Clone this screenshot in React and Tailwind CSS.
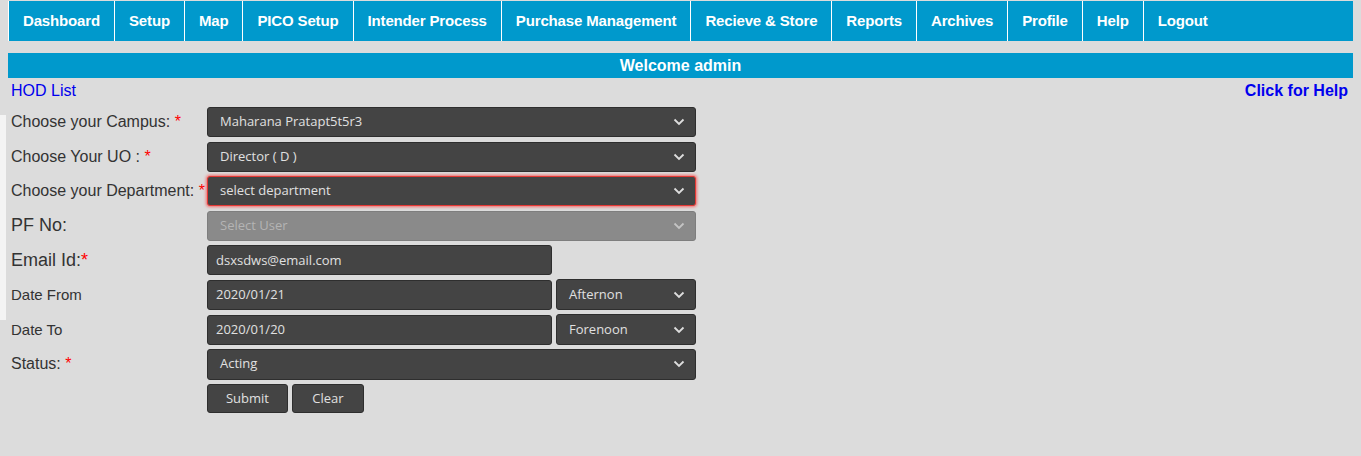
import React from 'react';

const navItems = [
  'Dashboard',
  'Setup',
  'Map',
  'PICO Setup',
  'Intender Process',
  'Purchase Management',
  'Recieve & Store',
  'Reports',
  'Archives',
  'Profile',
  'Help',
  'Logout',
];

const Chevron = ({ light }) => (
  <svg width="12" height="8" viewBox="0 0 12 8" className="absolute right-[10px] top-1/2 -translate-y-1/2">
    <path d="M1.5 1.5 L6 6 L10.5 1.5" fill="none" stroke={light ? '#c4c4c4' : '#dedede'} strokeWidth="1.8" />
  </svg>
);

const Select = ({ value, className = '', disabled, invalid }) => (
  <div
    className={
      'relative h-[30px] rounded-[3px] border flex items-center pl-[12px] text-[13px] ' +
      (disabled
        ? 'bg-[#8a8a8a] border-[#7e7e7e] text-[#b4b4b4] '
        : invalid
        ? 'bg-[#444444] border-[#e53935] shadow-[0_0_3px_1px_rgba(255,60,60,0.7)] text-[#e0e0e0] '
        : 'bg-[#444444] border-[#2e2e2e] text-[#e0e0e0] ') +
      className
    }
    style={{ fontFamily: '"Open Sans", sans-serif' }}
  >
    {value}
    <Chevron light={disabled} />
  </div>
);

const Input = ({ value, className = '' }) => (
  <div
    className={
      'h-[30px] rounded-[3px] border border-[#2e2e2e] bg-[#444444] flex items-center pl-[8px] text-[13px] text-[#e0e0e0] ' +
      className
    }
    style={{ fontFamily: '"Open Sans", sans-serif' }}
  >
    {value}
  </div>
);

const Req = () => <span className="text-[#ff0000]"> *</span>;

const Row = ({ label, children }) => (
  <div className="flex items-center h-[30px]">
    <div className="w-[196px] text-[#333333] shrink-0">{label}</div>
    {children}
  </div>
);

export default function App() {
  return (
    <div
      className="min-h-[456px] bg-[#dcdcdc] pt-[1px]"
      style={{ fontFamily: '"Liberation Sans", Arial, sans-serif' }}
    >
      <div className="px-[8px]">
        <nav className="flex h-[40px] bg-[#0099cc]">
          {navItems.map((item) => (
            <div
              key={item}
              className="flex items-center px-[14px] border-l border-white text-white font-bold text-[15px] tracking-[-0.15px] whitespace-nowrap"
            >
              {item}
            </div>
          ))}
        </nav>
        <div className="mt-[12px] h-[25px] bg-[#0099cc] flex items-center justify-center text-white font-bold text-[16px]">
          Welcome admin
        </div>
      </div>

      <div className="flex justify-between items-center h-[22px] mt-[2px] pl-[11px] pr-[13px] text-[16px] text-[#0000ee]">
        <span>HOD List</span>
        <span className="font-bold">Click for Help</span>
      </div>

      <div className="flex mt-[5px]">
        <div className="w-[6px] h-[205px] mt-[8px] bg-[#f4f4f4] shrink-0" />
        <div className="flex flex-col gap-[4.6px] pl-[5px]">
          <Row label={<span className="text-[16px]">Choose your Campus:<Req /></span>}>
            <Select value="Maharana Pratapt5t5r3" className="w-[489px]" />
          </Row>
          <Row label={<span className="text-[16px]">Choose Your UO :<Req /></span>}>
            <Select value="Director ( D )" className="w-[489px]" />
          </Row>
          <Row label={<span className="text-[16px]">Choose your Department:<Req /></span>}>
            <Select invalid value="select department" className="w-[489px]" />
          </Row>
          <Row label={<span className="text-[18px]">PF No:</span>}>
            <Select disabled value="Select User" className="w-[489px]" />
          </Row>
          <Row label={<span className="text-[18px]">Email Id:<span className="text-[#ff0000]">*</span></span>}>
            <Input value="dsxsdws@email.com" className="w-[345px] h-[29px]" />
          </Row>
          <Row label={<span className="text-[15px]">Date From</span>}>
            <div className="flex gap-[4px] items-center">
              <Input value="2020/01/21" className="w-[345px] h-[29px]" />
              <Select value="Afternon" className="w-[140px] h-[31px]" />
            </div>
          </Row>
          <Row label={<span className="text-[15px]">Date To</span>}>
            <div className="flex gap-[4px] items-center">
              <Input value="2020/01/20" className="w-[345px] h-[29px]" />
              <Select value="Forenoon" className="w-[140px] h-[31px]" />
            </div>
          </Row>
          <Row label={<span className="text-[16px]">Status:<Req /></span>}>
            <Select value="Acting" className="w-[489px] h-[31px]" />
          </Row>
          <div className="flex h-[30px] pl-[196px] gap-[4px]">
            <button
              className="w-[81px] h-[29px] rounded-[3px] border border-[#2e2e2e] bg-[#444444] text-[13px] text-[#e0e0e0]"
              style={{ fontFamily: '"Open Sans", sans-serif' }}
            >
              Submit
            </button>
            <button
              className="w-[72px] h-[29px] rounded-[3px] border border-[#2e2e2e] bg-[#444444] text-[13px] text-[#e0e0e0]"
              style={{ fontFamily: '"Open Sans", sans-serif' }}
            >
              Clear
            </button>
          </div>
        </div>
      </div>
    </div>
  );
}
